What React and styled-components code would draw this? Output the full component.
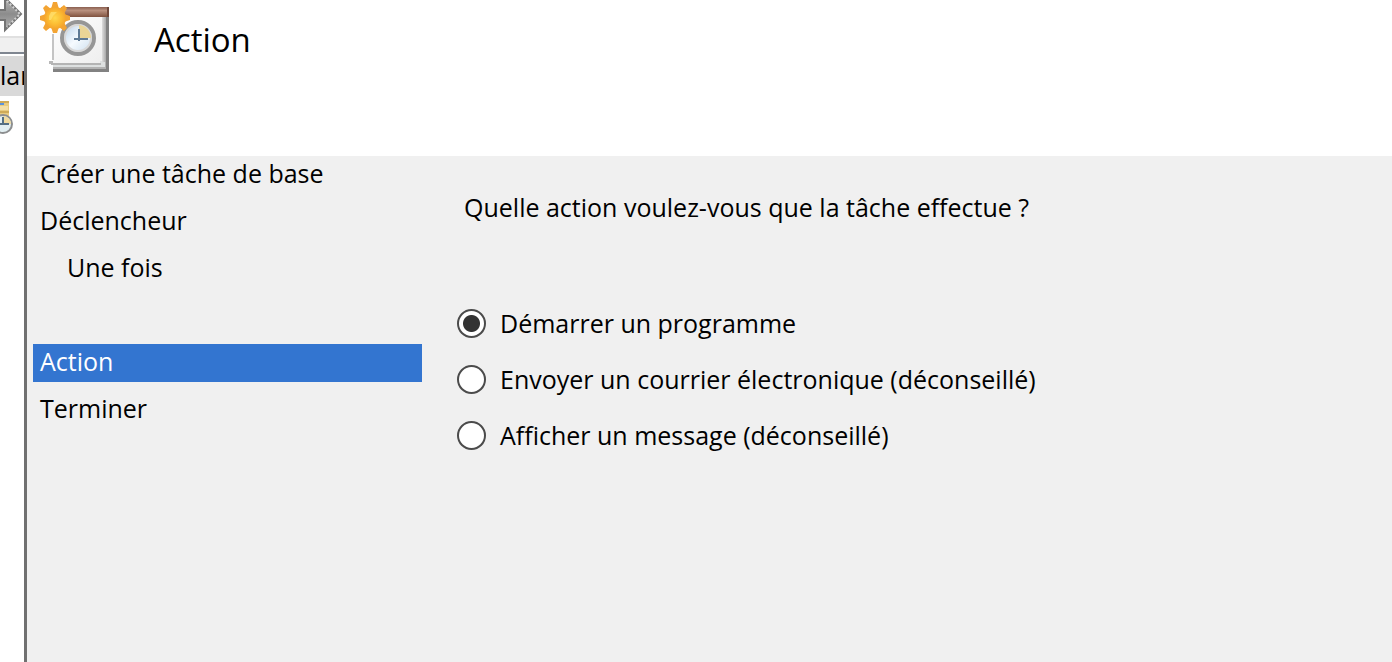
import React from 'react';
import styled, { createGlobalStyle } from 'styled-components';

const GlobalStyle = createGlobalStyle`
  * { box-sizing: border-box; }
  body {
    margin: 0;
    background: #ffffff;
    color: #000000;
    font-family: "Open Sans", "Noto Sans", sans-serif;
    font-size: 25px;
    line-height: 38px;
    font-variant-ligatures: none;
  }
`;

const Desktop = styled.div`
  display: flex;
  min-height: 100vh;
  overflow: hidden;
`;

const ConsoleStrip = styled.aside`
  flex: 0 0 24px;
  overflow: hidden;
  background: #ffffff;
`;

const ConsoleToolbar = styled.div`
  height: 36px;
`;

const ConsoleGap = styled.div`
  height: 18px;
  background: #f0f0f0;
  border-top: 2px solid #e0e0e0;
  border-bottom: 2px solid #7f8690;
`;

const TreeRoot = styled.div`
  height: 40px;
  margin-top: 2px;
  overflow: hidden;
  white-space: nowrap;
  background: #d9d9d9;
`;

const TreeIcon = styled.div`
  padding-top: 4px;
`;

const Wizard = styled.main`
  flex: 1;
  min-width: 0;
  display: flex;
  flex-direction: column;
  border-left: 3px solid #707070;
`;

const Header = styled.header`
  display: flex;
  align-items: flex-start;
  gap: 43px;
  height: 156px;
  padding-left: 12px;
  background: #ffffff;
`;

const Title = styled.h1`
  margin: 0;
  padding-top: 20px;
  font-size: 33px;
  font-weight: 400;
  line-height: 40px;
`;

const Body = styled.div`
  flex: 1;
  display: flex;
  gap: 30px;
  padding-left: 6px;
  background: #f0f0f0;
`;

const Steps = styled.ol`
  flex: 0 0 389px;
  display: flex;
  flex-direction: column;
  gap: 9px;
  margin: 0;
  padding: 0;
  list-style: none;
`;

const Step = styled.li`
  height: 38px;
  line-height: 34px;
  padding-left: ${(p) => (p.$nested ? 34 : 7)}px;
  color: ${(p) => (p.$current ? '#ffffff' : '#000000')};
  background: ${(p) => (p.$current ? '#3375d0' : 'transparent')};
`;

const Question = styled.fieldset`
  flex: 1;
  min-width: 0;
  margin: 0;
  padding: 0 0 0 5px;
  border: 0;
`;

const Legend = styled.legend`
  padding: 32px 0 78px 7px;
`;

const Options = styled.div`
  display: flex;
  flex-direction: column;
  gap: 18px;
`;

const Option = styled.label`
  display: flex;
  align-items: center;
  gap: 14px;
  white-space: nowrap;
`;

const Radio = styled.input`
  appearance: none;
  flex: none;
  width: 29px;
  height: 29px;
  margin: 0;
  border: 2px solid #4b4b4b;
  border-radius: 50%;
  background: #ffffff;
  &:checked {
    background: radial-gradient(circle, #333333 0 8px, #ffffff 9px);
  }
`;

const ArrowIcon = () => (
  <svg width="24" height="34" viewBox="0 0 24 34" aria-hidden="true">
    <defs>
      <linearGradient id="arrow" x1="0" y1="0" x2="0" y2="1">
        <stop offset="0" stopColor="#b9b9b9" />
        <stop offset="0.5" stopColor="#8c8c8c" />
        <stop offset="1" stopColor="#b4b4b4" />
      </linearGradient>
    </defs>
    <path d="M-2 10H5V-2L21 14L5 30V20H-2Z" fill="url(#arrow)" stroke="#747474" strokeWidth="2" />
    <path d="M7 1L20 14L7 27" fill="none" stroke="#d2d2d2" strokeWidth="2" strokeDasharray="2 2" />
  </svg>
);

const TaskFolderIcon = () => (
  <svg width="24" height="34" viewBox="0 0 24 34" aria-hidden="true">
    <path d="M0 1H9V18H0Z" fill="#e8cb80" />
    <path d="M0 1H9V3H0ZM0 11H9V13H0Z" fill="#cfab58" />
    <path d="M0 3H4V5H0Z" fill="#5b93dc" />
    <path d="M0 6H8V10H0Z" fill="#f3dfa6" />
    <circle cx="3" cy="24" r="9" fill="#e2eff2" stroke="#8c8e8f" strokeWidth="2" />
    <path d="M3 24V16A8 8 0 0 1 11 24Z" fill="#f0dba0" />
    <path d="M3 17V25M-1 24H9" fill="none" stroke="#557084" strokeWidth="2" />
  </svg>
);

const TaskIcon = () => (
  <svg width="72" height="76" viewBox="0 0 72 76" aria-hidden="true">
    <defs>
      <linearGradient id="bar" x1="0" y1="0" x2="0" y2="1">
        <stop offset="0" stopColor="#8a5f50" />
        <stop offset="0.35" stopColor="#b9917f" />
        <stop offset="1" stopColor="#80523f" />
      </linearGradient>
      <linearGradient id="paper" x1="0" y1="0" x2="1" y2="1">
        <stop offset="0" stopColor="#ffffff" />
        <stop offset="1" stopColor="#eeeeee" />
      </linearGradient>
      <linearGradient id="side" x1="0" y1="0" x2="1" y2="0">
        <stop offset="0" stopColor="#dedede" />
        <stop offset="1" stopColor="#a8a8a8" />
      </linearGradient>
      <linearGradient id="face" x1="0" y1="0" x2="1" y2="1">
        <stop offset="0" stopColor="#bcd4ea" />
        <stop offset="0.5" stopColor="#f6fbff" />
        <stop offset="1" stopColor="#cfe0ef" />
      </linearGradient>
      <radialGradient id="sun">
        <stop offset="0" stopColor="#ffd94e" />
        <stop offset="0.6" stopColor="#fcbc33" />
        <stop offset="1" stopColor="#f5a42c" />
      </radialGradient>
    </defs>
    <path d="M14 14H70V72H14Z" fill="#828282" />
    <path d="M14 60H67V69H14Z" fill="#b2b2b2" />
    <path d="M14 14H66V67H14Z" fill="#dde0e0" />
    <path d="M63 17H67V62H63Z" fill="url(#side)" />
    <path d="M14 16H63V61H61V64H10V61H14Z" fill="url(#paper)" />
    <path d="M14 34V60" fill="none" stroke="#c4c4c4" strokeWidth="2" />
    <path d="M10 61H14V64H10Z" fill="#b8b8b8" />
    <path d="M12 63H62V65H12Z" fill="#b4b4b4" />
    <path d="M22 7H70V17H22Z" fill="url(#bar)" />
    <path d="M68 7H70V17H68Z" fill="#70483a" />
    <circle cx="39" cy="38" r="16" fill="#c4c4c4" stroke="#969696" strokeWidth="4" />
    <circle cx="39" cy="38" r="13" fill="url(#face)" stroke="#d8d8d8" strokeWidth="2" />
    <path d="M40 38V25A13 13 0 0 1 52 38Z" fill="#ead596" />
    <path d="M40 29V41M35 39H49" fill="none" stroke="#5f7a94" strokeWidth="2" />
    <path
      d="M14 2H18L20 9L25 5L28 8L25 14L31 16V20L25 22L28 28L25 31L20 27L18 33H14L12 27L7 31L4 28L7 22L1 20V16L7 14L4 8L7 5L12 9Z"
      fill="#f3a433"
    />
    <circle cx="16" cy="18" r="11" fill="url(#sun)" />
    <path d="M12 12H18L14 16L12 20H10V16Z" fill="#ffe273" opacity="0.7" />
  </svg>
);

const steps = [
  { label: 'Créer une tâche de base' },
  { label: 'Déclencheur' },
  { label: 'Une fois', nested: true },
  { label: '' },
  { label: 'Action', current: true },
  { label: 'Terminer' },
];

const actions = [
  'Démarrer un programme',
  'Envoyer un courrier électronique (déconseillé)',
  'Afficher un message (déconseillé)',
];

export default function App() {
  return (
    <Desktop>
      <GlobalStyle />
      <ConsoleStrip>
        <ConsoleToolbar>
          <ArrowIcon />
        </ConsoleToolbar>
        <ConsoleGap />
        <TreeRoot>lan</TreeRoot>
        <TreeIcon>
          <TaskFolderIcon />
        </TreeIcon>
      </ConsoleStrip>
      <Wizard>
        <Header>
          <TaskIcon />
          <Title>Action</Title>
        </Header>
        <Body>
          <Steps>
            {steps.map((step, i) => (
              <Step
                key={i}
                $nested={step.nested}
                $current={step.current}
                aria-current={step.current ? 'step' : undefined}
                aria-hidden={step.label ? undefined : true}
              >
                {step.label}
              </Step>
            ))}
          </Steps>
          <Question>
            <Legend>Quelle action voulez-vous que la tâche effectue ?</Legend>
            <Options>
              {actions.map((label, i) => (
                <Option key={label}>
                  <Radio type="radio" name="action" defaultChecked={i === 0} />
                  {label}
                </Option>
              ))}
            </Options>
          </Question>
        </Body>
      </Wizard>
    </Desktop>
  );
}
